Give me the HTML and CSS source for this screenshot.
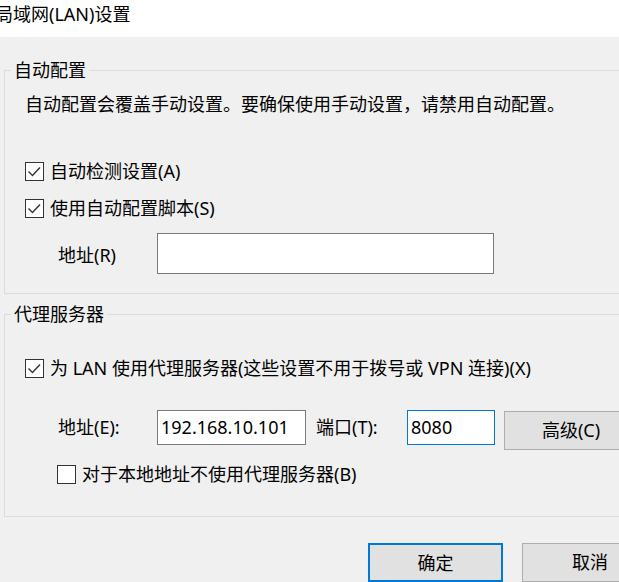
FILE: index.html
```html
<!DOCTYPE html>
<html lang="zh-CN">
<head>
<meta charset="utf-8">
<title>局域网(LAN)设置</title>
<link rel="stylesheet" href="styles.css">
</head>
<body>
<div class="titlebar"><span class="title">局域网(LAN)设置</span></div>
<div class="dialog">
  <fieldset class="group g1">
    <legend>自动配置</legend>
    <div class="group-body g1-body">
      <p class="desc">自动配置会覆盖手动设置。要确保使用手动设置，请禁用自动配置。</p>
      <div class="check c1"><span class="box"><svg viewBox="0 0 19 19" width="19" height="19"><path d="M3.5 9.5 L7.5 13.5 L15 5.5" fill="none" stroke="#333" stroke-width="1.4"/></svg></span><span>自动检测设置(A)</span></div>
      <div class="check c2"><span class="box"><svg viewBox="0 0 19 19" width="19" height="19"><path d="M3.5 9.5 L7.5 13.5 L15 5.5" fill="none" stroke="#333" stroke-width="1.4"/></svg></span><span>使用自动配置脚本(S)</span></div>
      <div class="row row-r"><span class="lbl">地址(R)</span><span class="input wide"></span></div>
    </div>
  </fieldset>
  <fieldset class="group g2">
    <legend>代理服务器</legend>
    <div class="group-body g2-body">
      <div class="check c3"><span class="box"><svg viewBox="0 0 19 19" width="19" height="19"><path d="M3.5 9.5 L7.5 13.5 L15 5.5" fill="none" stroke="#333" stroke-width="1.4"/></svg></span><span>为 LAN 使用代理服务器(这些设置不用于拨号或 VPN 连接)(X)</span></div>
      <div class="row row-e">
        <span class="lbl">地址(E):</span>
        <span class="input addr">192.168.10.101</span>
        <span class="lbl port-lbl">端口(T):</span>
        <span class="input port focused">8080</span>
        <button class="btn adv">高级(C)</button>
      </div>
      <div class="check c4"><span class="box"></span><span>对于本地地址不使用代理服务器(B)</span></div>
    </div>
  </fieldset>
  <div class="actions">
    <button class="btn primary">确定</button>
    <button class="btn">取消</button>
  </div>
</div>
</body>
</html>
```
FILE: styles.css
```css
html, body {
  margin: 0;
  padding: 0;
}
body {
  width: 619px;
  height: 582px;
  overflow: hidden;
  background: #f0f0f0;
  font-family: "Noto Sans", "Noto Sans CJK SC", sans-serif;
  font-size: 18px;
  color: #000;
}
.titlebar {
  height: 37px;
  background: #fff;
  line-height: 28px;
  white-space: nowrap;
}
.title {
  display: inline-block;
  margin-left: -5px;
}
.dialog {
  width: 654px;
  padding: 0 2px 0 4px;
}
.group {
  margin: 0;
  padding: 0;
  border: 1px solid #dcdcdc;
  min-width: 0;
}
.group legend {
  margin-left: 6px;
  padding: 0 3px;
  line-height: 20px;
}
.g1 { margin-top: 23px; }
.g2 { margin-top: 10px; }
.group-body {
  padding-left: 20px;
  display: flex;
  flex-direction: column;
  align-items: flex-start;
}
.g1-body { padding-bottom: 19px; }
.g2-body { padding-bottom: 30px; }
.desc {
  margin: 12px 0 0 0;
  line-height: 24px;
  white-space: nowrap;
}
.check {
  display: flex;
  align-items: center;
  gap: 6px;
  height: 24px;
  line-height: 24px;
  white-space: nowrap;
}
.box {
  width: 17px;
  height: 17px;
  border: 1px solid #333;
  background: #fff;
  position: relative;
  flex: none;
}
.box svg {
  display: block;
  margin: -1px 0 0 -1px;
}
.c1 { margin-top: 43px; }
.c2 { margin-top: 13px; }
.c3 { margin-top: 32px; }
.c4 { margin-top: 12px; margin-left: 32px; }
.row {
  display: flex;
  align-items: flex-start;
  margin-left: 33px;
  white-space: nowrap;
}
.row-r {
  margin-top: 13px;
  align-items: center;
}
.row-e {
  margin-top: 30px;
  height: 40px;
}
.lbl {
  width: 99px;
  flex: none;
}
.row-e .lbl {
  line-height: 35px;
}
.port-lbl {
  margin-left: 10px;
  width: 91px !important;
}
.input {
  box-sizing: border-box;
  background: #fff;
  border: 1px solid #7a7a7a;
  padding-left: 3px;
  flex: none;
}
.input.wide {
  width: 337px;
  height: 41px;
}
.input.addr {
  width: 149px;
  height: 35px;
  line-height: 33px;
}
.input.port {
  width: 88px;
  height: 35px;
  line-height: 33px;
}
.input.focused {
  border-color: #0078d7;
}
.btn {
  box-sizing: border-box;
  font: inherit;
  color: #000;
  background: #e1e1e1;
  border: 1px solid #adadad;
  width: 136px;
  height: 39px;
  padding: 0;
  line-height: 37px;
  flex: none;
}
.btn.adv {
  margin-left: 9px;
  margin-top: 1px;
  width: 134px;
}
.btn.primary {
  border: 2px solid #0078d7;
  width: 135px;
}
.actions {
  display: flex;
  justify-content: flex-end;
  gap: 19px;
  margin-top: 26px;
}
```
